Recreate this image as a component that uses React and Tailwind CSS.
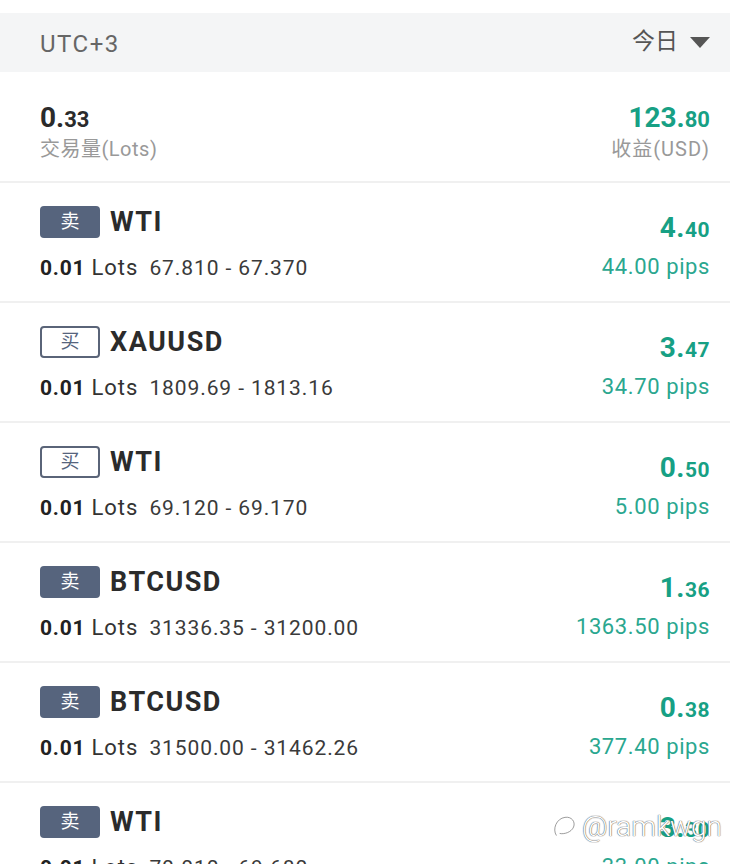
import React from 'react';

const font = { fontFamily: 'Roboto, "Noto Sans CJK SC", sans-serif' };

const trades = [
  { side: 'sell', symbol: 'WTI', lots: '0.01', range: '67.810 - 67.370', profit: ['4.', '40'], pips: '44.00 pips' },
  { side: 'buy', symbol: 'XAUUSD', lots: '0.01', range: '1809.69 - 1813.16', profit: ['3.', '47'], pips: '34.70 pips' },
  { side: 'buy', symbol: 'WTI', lots: '0.01', range: '69.120 - 69.170', profit: ['0.', '50'], pips: '5.00 pips' },
  { side: 'sell', symbol: 'BTCUSD', lots: '0.01', range: '31336.35 - 31200.00', profit: ['1.', '36'], pips: '1363.50 pips' },
  { side: 'sell', symbol: 'BTCUSD', lots: '0.01', range: '31500.00 - 31462.26', profit: ['0.', '38'], pips: '377.40 pips' },
  { side: 'sell', symbol: 'WTI', lots: '0.01', range: '70.010 - 69.680', profit: ['3.', '30'], pips: '33.00 pips' },
];

const SideBadge = ({ side }) =>
  side === 'sell' ? (
    <span className="flex items-center justify-center w-[60px] h-[32px] rounded-[4px] bg-[#56647d] text-white text-[19px]">卖</span>
  ) : (
    <span className="flex items-center justify-center w-[60px] h-[32px] rounded-[4px] border-2 border-[#5a6478] text-[#56647d] text-[19px]">买</span>
  );

const TradeRow = ({ t }) => (
  <div className="flex justify-between pl-[40px] pr-[20px] pt-[23px] h-[120px] border-b-2 border-[#f0f0f0]">
    <div className="flex flex-col">
      <div className="flex items-center gap-[10px] h-[32px]">
        <SideBadge side={t.side} />
        <span className="text-[27px] font-bold text-[#2b2b2b] leading-none tracking-[1.5px]">{t.symbol}</span>
      </div>
      <div className="flex items-baseline mt-[19px] text-[#333] leading-none">
        <span className="text-[21px] font-bold tracking-[0.8px] text-[#222]">{t.lots}</span>
        <span className="text-[22px] ml-[6px] tracking-[1px]">Lots</span>
        <span className="text-[21px] ml-[11px] text-[#3a3a3a] tracking-[0.9px]">{t.range}</span>
      </div>
    </div>
    <div className="flex flex-col items-end">
      <div className="flex items-baseline h-[32px] pt-[8px] text-[#17a084] font-bold leading-none tracking-[0.5px]">
        <span className="text-[28px]">{t.profit[0]}</span>
        <span className="text-[21px]">{t.profit[1]}</span>
      </div>
      <div className="mt-[18px] text-[22px] text-[#2aa78f] leading-none tracking-[0.6px]">{t.pips}</div>
    </div>
  </div>
);

export default function App() {
  return (
    <div className="relative w-[730px] h-[864px] overflow-hidden bg-white" style={font}>
      <div className="h-[13px] bg-white" />
      <div className="flex items-center justify-between h-[59px] pl-[40px] pr-[20px] bg-[#f4f5f6]">
        <span className="text-[24px] text-[#666] tracking-[1.5px] mt-[2px]">UTC+3</span>
        <div className="flex items-center gap-[12px]">
          <span className="text-[23px] text-[#555]">今日</span>
          <svg width="20" height="12" viewBox="0 0 20 12">
            <path d="M0 0 L20 0 L10 11 Z" fill="#555" />
          </svg>
        </div>
      </div>
      <div className="flex justify-between pl-[40px] pr-[20px] pt-[32px] h-[111px] border-b-2 border-[#f0f0f0]">
        <div className="flex flex-col">
          <div className="flex items-baseline font-bold text-[#2b2b2b] leading-none">
            <span className="text-[28px]">0.</span>
            <span className="text-[22px]">33</span>
          </div>
          <span className="mt-[7px] text-[20px] text-[#999] leading-none tracking-[0.5px]">交易量(Lots)</span>
        </div>
        <div className="flex flex-col items-end">
          <div className="flex items-baseline font-bold text-[#17a084] leading-none">
            <span className="text-[28px]">123.</span>
            <span className="text-[22px]">80</span>
          </div>
          <span className="mt-[7px] text-[20px] text-[#999] leading-none tracking-[1px]">收益(USD)</span>
        </div>
      </div>
      {trades.map((t, i) => (
        <TradeRow key={i} t={t} />
      ))}
      <div
        className="absolute right-[8px] top-[806px] flex items-center gap-[2px] text-[28px] font-light text-white"
        style={{ textShadow: '0 0 1px #555, 0 0 1px #555' }}
      >
        <svg width="30" height="30" viewBox="0 0 28 28">
          <path d="M6 22 C2 16 6 6 14 5 C20 4 24 9 22 14 C20 19 13 21 9 20" fill="none" stroke="#fff" strokeWidth="2" />
          <path d="M6 22 C2 16 6 6 14 5 C20 4 24 9 22 14 C20 19 13 21 9 20" fill="none" stroke="#666" strokeWidth="0.6" />
        </svg>
        <span>@ramkwgn</span>
      </div>
    </div>
  );
}
